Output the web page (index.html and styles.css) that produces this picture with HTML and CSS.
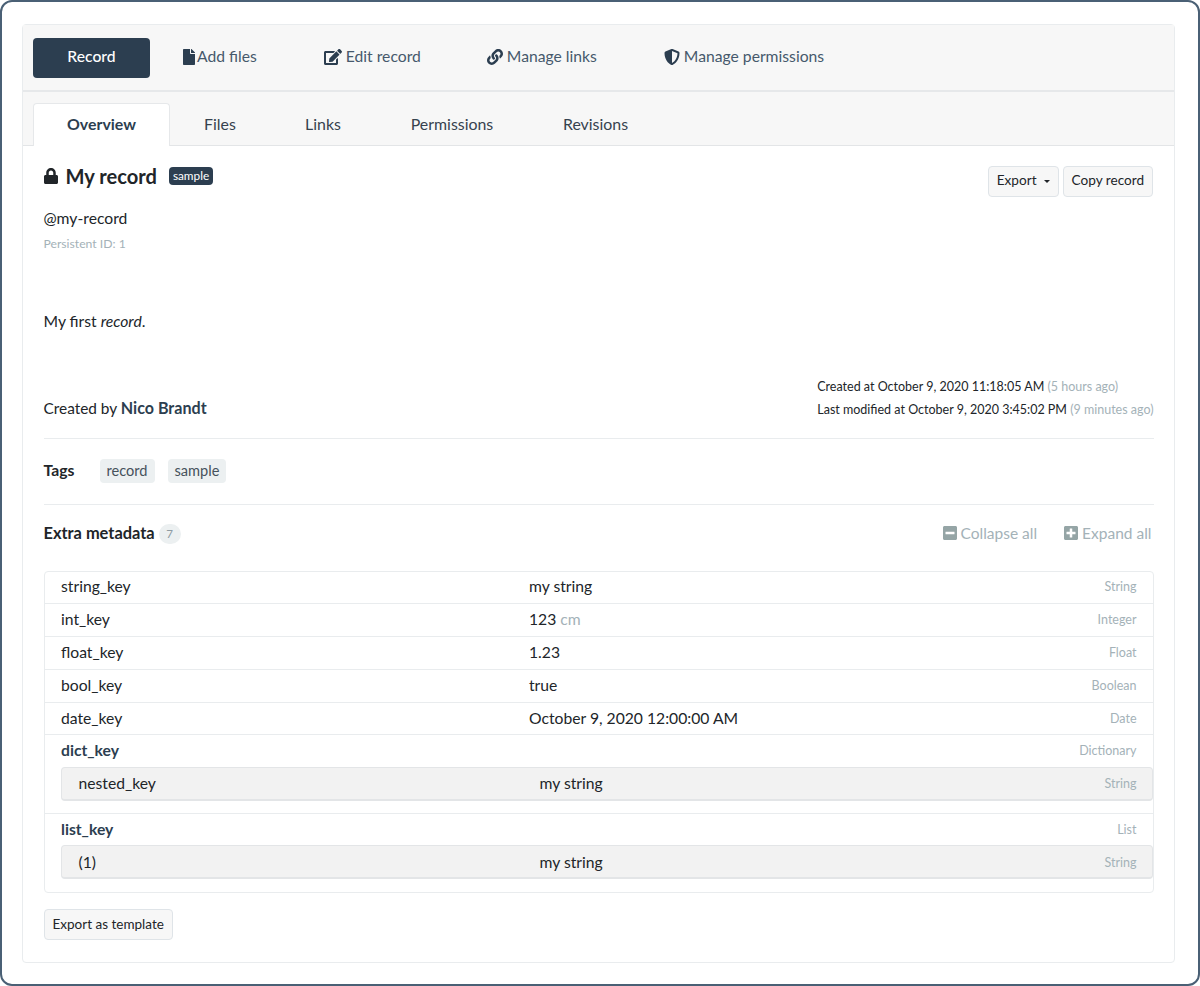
FILE: index.html
```html
<!DOCTYPE html>
<html lang="en">
<head>
<meta charset="UTF-8">
<meta name="viewport" content="width=device-width, initial-scale=1.0">
<title>My record</title>
<link rel="stylesheet" href="styles.css">
</head>
<body>
<div class="frame">
  <div class="card">
    <div class="card-head">
      <nav class="actions">
        <a class="action active"><span>Record</span></a>
        <a class="action action-files">
          <svg class="icon" viewBox="0 0 384 512"><path d="M224 136V0H24C10.7 0 0 10.7 0 24v464c0 13.3 10.7 24 24 24h336c13.3 0 24-10.7 24-24V160H248c-13.2 0-24-10.8-24-24zm160-14.1v6.1H256V0h6.1c6.4 0 12.5 2.5 17 7l97.9 98c4.5 4.5 7 10.6 7 16.9z"/></svg><span>Add files</span>
        </a>
        <a class="action action-edit">
          <svg class="icon" viewBox="0 0 576 512"><path d="M402.6 83.2l90.2 90.2c3.8 3.8 3.8 10 0 13.8L274.4 405.6l-92.8 10.3c-12.4 1.4-22.9-9.1-21.5-21.5l10.3-92.8L388.8 83.2c3.8-3.8 10-3.8 13.8 0zm162-22.9l-48.8-48.8c-15.2-15.2-39.9-15.2-55.2 0l-35.4 35.4c-3.8 3.8-3.8 10 0 13.8l90.2 90.2c3.8 3.8 10 3.8 13.8 0l35.4-35.4c15.2-15.3 15.2-40 0-55.2zM384 346.2V448H64V128h229.8c3.2 0 6.2-1.3 8.5-3.5l40-40c7.6-7.6 2.2-20.5-8.5-20.5H48C21.5 64 0 85.5 0 112v352c0 26.5 21.5 48 48 48h352c26.5 0 48-21.5 48-48V306.2c0-10.7-12.9-16-20.5-8.5l-40 40c-2.2 2.3-3.5 5.3-3.5 8.5z"/></svg><span>Edit record</span>
        </a>
        <a class="action action-links">
          <svg class="icon" viewBox="0 0 512 512"><path d="M326.612 185.391c59.747 59.809 58.927 155.698.36 214.59-.11.12-.24.25-.36.37l-67.2 67.2c-59.27 59.27-155.699 59.262-214.96 0-59.27-59.26-59.27-155.7 0-214.96l37.106-37.106c9.84-9.84 26.786-3.3 27.294 10.606.648 17.722 3.826 35.527 9.69 52.721 1.986 5.822.567 12.262-3.783 16.612l-13.087 13.087c-28.026 28.026-28.905 73.66-1.155 101.96 28.024 28.579 74.086 28.749 102.325.51l67.2-67.19c28.191-28.191 28.073-73.757 0-101.83-3.701-3.694-7.429-6.564-10.341-8.569a16.037 16.037 0 0 1-6.947-12.606c-.396-10.567 3.348-21.456 11.698-29.806l21.054-21.055c5.521-5.521 14.182-6.199 20.584-1.731a152.482 152.482 0 0 1 20.522 17.197zM467.547 44.449c-59.261-59.262-155.69-59.27-214.96 0l-67.2 67.2c-.12.12-.25.25-.36.37-58.566 58.892-59.387 154.781.36 214.59a152.454 152.454 0 0 0 20.521 17.196c6.402 4.468 15.064 3.789 20.584-1.731l21.054-21.055c8.35-8.35 12.094-19.239 11.698-29.806a16.037 16.037 0 0 0-6.947-12.606c-2.912-2.005-6.64-4.875-10.341-8.569-28.073-28.073-28.191-73.639 0-101.83l67.2-67.19c28.239-28.239 74.3-28.069 102.325.51 27.75 28.3 26.872 73.934-1.155 101.96l-13.087 13.087c-4.35 4.35-5.769 10.79-3.783 16.612 5.864 17.194 9.042 34.999 9.69 52.721.509 13.906 17.454 20.446 27.294 10.606l37.106-37.106c59.271-59.259 59.271-155.699.001-214.959z"/></svg><span>Manage links</span>
        </a>
        <a class="action action-perms">
          <svg class="icon" viewBox="0 0 512 512"><path d="M466.5 83.7l-192-80a48.15 48.15 0 0 0-36.9 0l-192 80C27.7 91.1 16 108.6 16 128c0 198.5 114.5 335.7 221.5 380.3 11.8 4.9 25.1 4.9 36.9 0C360.1 472.6 496 349.3 496 128c0-19.4-11.7-36.9-29.5-44.3zM256.1 446.3l-.1-381 175.9 73.3c-3.3 151.4-82.1 261.1-175.8 307.7z"/></svg><span>Manage permissions</span>
        </a>
      </nav>
    </div>
    <div class="tabs">
      <a class="tab tab-overview active">Overview</a>
      <a class="tab tab-files">Files</a>
      <a class="tab tab-links">Links</a>
      <a class="tab tab-perms">Permissions</a>
      <a class="tab tab-revs">Revisions</a>
    </div>
    <div class="card-body">
      <div class="title-row">
        <div>
          <h1 class="title">
            <svg class="lock" viewBox="0 0 448 512"><path d="M400 224h-24v-72C376 68.2 307.8 0 224 0S72 68.2 72 152v72H48c-26.5 0-48 21.5-48 48v192c0 26.5 21.5 48 48 48h352c26.5 0 48-21.5 48-48V272c0-26.5-21.5-48-48-48zm-104 0H152v-72c0-39.7 32.3-72 72-72s72 32.3 72 72v72z"/></svg>
            My record
            <span class="type-badge">sample</span>
          </h1>
          <div class="identifier">@my-record</div>
          <div class="persistent">Persistent ID: 1</div>
        </div>
        <div class="title-buttons">
          <button class="btn">Export<span class="caret"></span></button>
          <button class="btn">Copy record</button>
        </div>
      </div>
      <p class="description">My first <em>record</em>.</p>
      <div class="meta-row">
        <div class="creator">Created by <a>Nico Brandt</a></div>
        <div class="dates">
          <div>Created at October 9, 2020 11:18:05 AM <span class="muted">(5 hours ago)</span></div>
          <div>Last modified at October 9, 2020 3:45:02 PM <span class="muted">(9 minutes ago)</span></div>
        </div>
      </div>
      <div class="tags-row">
        <strong class="tags-label">Tags</strong>
        <span class="tag">record</span>
        <span class="tag">sample</span>
      </div>
      <div class="extras-head">
        <div class="extras-title"><strong>Extra metadata</strong><span class="count">7</span></div>
        <div class="extras-links">
          <a><svg class="icon" viewBox="0 0 448 512"><path d="M400 32H48C21.5 32 0 53.5 0 80v352c0 26.5 21.5 48 48 48h352c26.5 0 48-21.5 48-48V80c0-26.5-21.5-48-48-48zM92 296c-6.6 0-12-5.4-12-12v-56c0-6.6 5.4-12 12-12h264c6.6 0 12 5.4 12 12v56c0 6.6-5.4 12-12 12H92z"/></svg>Collapse all</a>
          <a><svg class="icon" viewBox="0 0 448 512"><path d="M400 32H48C21.5 32 0 53.5 0 80v352c0 26.5 21.5 48 48 48h352c26.5 0 48-21.5 48-48V80c0-26.5-21.5-48-48-48zm-32 252c0 6.6-5.4 12-12 12h-92v92c0 6.6-5.4 12-12 12h-56c-6.6 0-12-5.4-12-12v-92H92c-6.6 0-12-5.4-12-12v-56c0-6.6 5.4-12 12-12h92v-92c0-6.6 5.4-12 12-12h56c6.6 0 12 5.4 12 12v92h92c6.6 0 12 5.4 12 12v56z"/></svg>Expand all</a>
        </div>
      </div>
      <div class="extras">
        <div class="extra"><span>string_key</span><span>my string</span><span class="extra-type">String</span></div>
        <div class="extra"><span>int_key</span><span>123 <span class="muted">cm</span></span><span class="extra-type">Integer</span></div>
        <div class="extra"><span>float_key</span><span>1.23</span><span class="extra-type">Float</span></div>
        <div class="extra"><span>bool_key</span><span>true</span><span class="extra-type">Boolean</span></div>
        <div class="extra"><span>date_key</span><span>October 9, 2020 12:00:00 AM</span><span class="extra-type">Date</span></div>
        <div class="extra-group">
          <div class="extra extra-parent"><a>dict_key</a><span></span><span class="extra-type">Dictionary</span></div>
          <div class="extra extra-nested"><span>nested_key</span><span>my string</span><span class="extra-type">String</span></div>
        </div>
        <div class="extra-group">
          <div class="extra extra-parent"><a>list_key</a><span></span><span class="extra-type">List</span></div>
          <div class="extra extra-nested"><span>(1)</span><span>my string</span><span class="extra-type">String</span></div>
        </div>
      </div>
      <button class="btn btn-template">Export as template</button>
    </div>
  </div>
</div>
</body>
</html>
```

FILE: styles.css
```css
* {
  box-sizing: border-box;
}
html, body {
  margin: 0;
  height: 986px;
  overflow: hidden;
  background-color: #fff;
}
body {
  font-family: 'Lato', sans-serif;
  font-size: 15.7px;
  color: #212529;
}
a {
  color: inherit;
  text-decoration: none;
}
.frame {
  height: 986px;
  padding: 22px 23px 21px 20px;
  border: 2px solid #4a6075;
  border-radius: 12px;
  background-color: #fff;
}
.card {
  height: 939px;
  border: 1.5px solid #e9ecee;
  border-radius: 4px;
}
.card-head {
  height: 66.5px;
  padding: 12.5px 10px 0;
  background-color: #f7f7f7;
  border-bottom: 2px solid #e6e8ea;
}
.actions {
  display: flex;
  align-items: center;
  height: 40px;
}
.action {
  display: flex;
  align-items: center;
  height: 40px;
  font-size: 15.7px;
  color: #46596c;
  white-space: nowrap;
}
.action span {
  margin-bottom: 3px;
}
.action.active {
  justify-content: center;
  width: 117px;
  border-radius: 4px;
  background-color: #2c3e50;
  color: #fff;
  font-weight: 500;
}
.action-files { margin-left: 33px; }
.action-edit { margin-left: 67px; }
.action-links { margin-left: 66px; }
.action-perms { margin-left: 67px; }
.icon {
  height: 16px;
  fill: #2c3e50;
  margin-right: 4px;
  margin-bottom: 2px;
}
.action-files .icon {
  margin-right: 2px;
}
.tabs {
  display: flex;
  align-items: flex-end;
  height: 54px;
  padding-left: 10px;
  background-color: #f7f7f7;
  border-bottom: 1.5px solid #e3e5e7;
  font-size: 15.9px;
  color: #36424e;
}
.tab {
  display: flex;
  align-items: center;
  justify-content: center;
  height: 42px;
  padding-bottom: 1px;
}
.tab.active {
  margin-bottom: -1.5px;
  height: 43px;
  padding-bottom: 4px;
  background-color: #fff;
  border: 1.5px solid #e6e8ea;
  border-bottom: 0;
  border-radius: 4px 4px 0 0;
  color: #2c3e50;
  font-weight: 700;
}
.tab-overview { width: 137px; }
.tab-files { width: 100px; }
.tab-links { width: 106px; }
.tab-perms { width: 152px; }
.tab-revs { width: 135px; }
.card-body {
  padding: 19px 20.5px 0;
}
.title-row {
  display: flex;
  justify-content: space-between;
  align-items: flex-start;
}
.title {
  display: flex;
  align-items: center;
  height: 22px;
  margin: 0;
  font-size: 20.1px;
  font-weight: 700;
  color: #212529;
}
.lock {
  height: 16px;
  margin-right: 8px;
  fill: #212529;
}
.type-badge {
  margin: 1px 0 0 12px;
  padding: 2px 4px;
  border-radius: 4px;
  background-color: #2c3e50;
  color: #fff;
  font-size: 11.8px;
  font-weight: 400;
  line-height: 14px;
}
.identifier {
  margin-top: 21px;
  line-height: 20px;
}
.persistent {
  margin-top: 8px;
  font-size: 12.2px;
  line-height: 15px;
  color: #a4b2b8;
}
.title-buttons {
  display: flex;
  gap: 4px;
  margin: 1px 0.5px 0 0;
}
.btn {
  height: 31px;
  padding: 0 8px 2px;
  border: 1.5px solid #dfe4e8;
  border-radius: 4px;
  background-color: #f7f7f7;
  font-family: 'Lato', sans-serif;
  font-size: 13.6px;
  color: #212529;
}
.caret {
  display: inline-block;
  margin-left: 7px;
  vertical-align: 2px;
  border-top: 3.5px solid #212529;
  border-left: 3.5px solid transparent;
  border-right: 3.5px solid transparent;
}
.description {
  margin: 60px 0 0;
  line-height: 20px;
}
.meta-row {
  display: flex;
  justify-content: space-between;
  align-items: flex-end;
  margin-top: 44px;
  padding-bottom: 17px;
  border-bottom: 1.5px solid #e9ecee;
}
.creator {
  margin-bottom: 3px;
  font-size: 15.4px;
  line-height: 20px;
}
.creator a {
  font-size: 16.1px;
  font-weight: 700;
  color: #2c3e50;
}
.dates {
  font-size: 12.5px;
  line-height: 23px;
}
.muted {
  color: #a4b2b8;
}
.tags-row {
  display: flex;
  align-items: center;
  height: 66px;
  border-bottom: 1.5px solid #e9ecee;
}
.tags-label {
  width: 56px;
  margin-top: -2px;
}
.tag {
  margin-right: 13px;
  padding: 0 7px;
  height: 24px;
  line-height: 23px;
  border-radius: 4px;
  background-color: #ecf0f1;
  font-size: 14.6px;
  color: #46525c;
}
.extras-head {
  display: flex;
  justify-content: space-between;
  align-items: center;
  height: 57px;
  padding-bottom: 2px;
}
.extras-title {
  display: flex;
  align-items: center;
  font-size: 16.4px;
}
.count {
  width: 22px;
  height: 20px;
  margin-left: 4px;
  margin-top: 3px;
  border-radius: 10px;
  background-color: #ecf0f1;
  color: #8f9ca3;
  font-size: 11.6px;
  line-height: 20px;
  text-align: center;
}
.extras-links {
  display: flex;
  gap: 27px;
  margin-top: 2px;
  padding-right: 2px;
  color: #a4b2b8;
  font-size: 15.5px;
}
.extras-links a {
  display: flex;
  align-items: center;
}
.extras-links .icon {
  height: 16px;
  margin-bottom: 0;
  fill: #95a5a6;
}
.extras {
  margin-top: 9px;
  border: 1.5px solid #e9ecee;
  border-radius: 4px;
}
.extra {
  display: grid;
  grid-template-columns: 468px 1fr auto;
  align-items: center;
  height: 32.8px;
  padding: 0 16px 2px 16.5px;
  border-bottom: 1.5px solid #e9ecee;
}
.extra-type {
  margin-top: 1px;
  font-size: 12.5px;
  color: #a4b2b8;
}
.extra-parent {
  height: 31.5px;
  border-bottom: 0;
}
.extra-parent a {
  font-weight: 700;
  color: #2c3e50;
}
.extra-nested {
  grid-template-columns: 461px 1fr auto;
  height: 34px;
  margin-left: 16px;
  padding: 0 15px 0 17px;
  border: 1.5px solid #e3e5e7;
  border-bottom-width: 2px;
  border-radius: 4px;
  background-color: #f2f2f2;
}
.extra-group {
  height: 78.5px;
  border-bottom: 1.5px solid #e9ecee;
}
.extra-group:last-child {
  border-bottom: 0;
}
.btn-template {
  display: block;
  margin-top: 16px;
  font-size: 13.5px;
}
```
